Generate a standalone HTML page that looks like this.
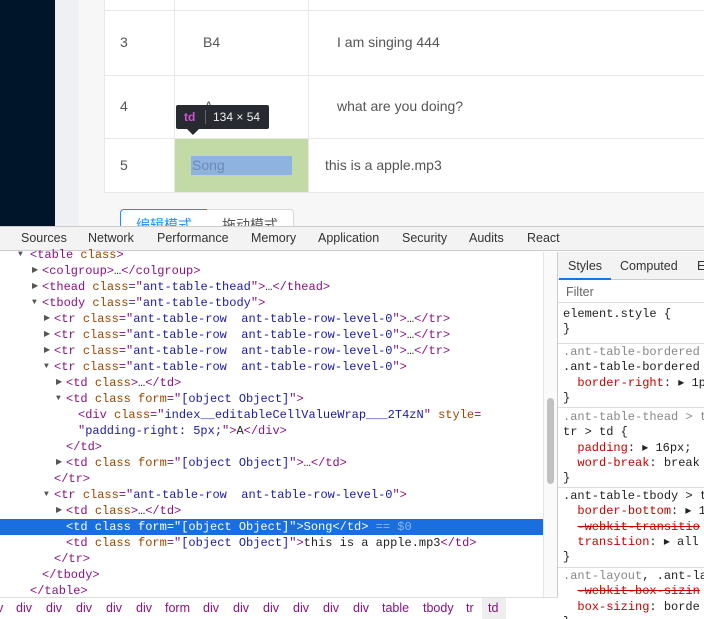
<!DOCTYPE html>
<html><head><meta charset="utf-8"><style>
*{margin:0;padding:0;box-sizing:border-box}
body{width:704px;height:619px;overflow:hidden;position:relative;background:#fff;font-family:"Liberation Sans",sans-serif}
.abs{position:absolute}
.mono{font-family:"Liberation Mono",monospace;font-size:12px;white-space:pre;color:#222}
.t{color:#881280}.a{color:#994500}.v{color:#1a1aa6}
.ln{position:absolute;height:16px;line-height:16px}
.tri{font-size:8px;color:#555;position:absolute}
.sb{font-family:"Liberation Mono",monospace;font-size:12px;line-height:15.3px;white-space:pre;color:#222;padding-left:5px;border-bottom:1px solid #ddd;overflow:hidden}
.r{color:#c80000}.g{color:#888}.s{color:#c80000;text-decoration:line-through}
</style></head><body>
<div class="abs" style="left:0;top:0;width:55px;height:226px;background:#001529"></div>
<div class="abs" style="left:55px;top:0;width:24px;height:226px;background:#eef0f3"></div>
<div class="abs" style="left:79px;top:0;width:625px;height:226px;background:#f7f7f7"></div>
<div class="abs" style="left:104px;top:0;width:600px;height:192px;background:#fff;border-left:1px solid #e8e8e8"></div>
<div class="abs" style="left:104px;top:10px;width:600px;height:1px;background:#e8e8e8"></div>
<div class="abs" style="left:104px;top:75px;width:600px;height:1px;background:#e8e8e8"></div>
<div class="abs" style="left:104px;top:138px;width:600px;height:1px;background:#e8e8e8"></div>
<div class="abs" style="left:104px;top:192px;width:600px;height:1px;background:#e8e8e8"></div>
<div class="abs" style="left:174px;top:0;width:1px;height:192px;background:#e8e8e8"></div>
<div class="abs" style="left:308px;top:0;width:1px;height:192px;background:#e8e8e8"></div>
<div class="abs" style="left:175px;top:139px;width:133px;height:53px;background:#c2dba6"></div>
<div class="abs" style="left:191px;top:156px;width:101px;height:19px;background:#8fb3e0"></div>
<div class="abs" style="font-size:14px;color:#555;left:120px;top:34px">3</div>
<div class="abs" style="font-size:14px;color:#555;left:203px;top:34px">B4</div>
<div class="abs" style="font-size:14px;color:#555;left:337px;top:34px">I am singing 444</div>
<div class="abs" style="font-size:14px;color:#555;left:120px;top:98px">4</div>
<div class="abs" style="font-size:14px;color:#555;left:204px;top:98px">A</div>
<div class="abs" style="font-size:14px;color:#555;left:337px;top:98px">what are you doing?</div>
<div class="abs" style="font-size:14px;color:#555;left:120px;top:157px">5</div>
<div class="abs" style="font-size:14px;color:#6a8bb5;left:192px;top:157px">Song</div>
<div class="abs" style="font-size:14px;color:#555;left:325px;top:157px">this is a apple.mp3</div>
<div class="abs" style="left:176px;top:105px;width:93px;height:24px;background:#272a31;border-radius:2px"></div>
<div class="abs" style="left:187px;top:129px;width:0;height:0;border-left:6px solid transparent;border-right:6px solid transparent;border-top:6px solid #272a31"></div>
<div class="abs" style="left:184px;top:110px;font-size:12px;font-weight:bold;color:#d84fd6">td</div>
<div class="abs" style="left:205px;top:110px;width:1px;height:14px;background:#666"></div>
<div class="abs" style="left:213px;top:110px;font-size:12px;color:#eee">134 × 54</div>
<div class="abs" style="left:120px;top:209px;width:88px;height:30px;border:1px solid #1890ff;border-radius:4px 0 0 4px;background:#fff;color:#1890ff;font-size:14px;font-family:'Liberation Sans','Noto Sans CJK SC',sans-serif;padding:5px 0 0 15px">编辑模式</div>
<div class="abs" style="left:207px;top:209px;width:87px;height:30px;border:1px solid #d9d9d9;border-left:none;border-radius:0 4px 4px 0;background:#fff;color:#555;font-size:14px;font-family:'Liberation Sans','Noto Sans CJK SC',sans-serif;padding:5px 0 0 15px">拖动模式</div>
<div class="abs" style="left:0;top:226px;width:704px;height:393px;background:#fff;border-top:1px solid #ccc"></div>
<div class="abs" style="left:0;top:227px;width:704px;height:24px;background:#f3f3f3;border-bottom:1px solid #ccc;font-size:12.5px;color:#333;line-height:23px">
<span class="abs" style="left:21px">Sources</span><span class="abs" style="left:88px">Network</span><span class="abs" style="left:157px">Performance</span><span class="abs" style="left:251px">Memory</span><span class="abs" style="left:318px">Application</span><span class="abs" style="left:402px">Security</span><span class="abs" style="left:469px">Audits</span><span class="abs" style="left:527px">React</span></div>
<div class="abs mono" style="left:0;top:247px;width:543px;height:350px">
<div class="ln" style="top:0"><span class="tri" style="left:18px">▼</span><span class="abs" style="left:30px"><span class="t">&lt;table </span><span class="a">class</span><span class="t">&gt;</span></span></div>
<div class="ln" style="top:16px"><span class="tri" style="left:32px">▶</span><span class="abs" style="left:42px"><span class="t">&lt;colgroup&gt;</span>…<span class="t">&lt;/colgroup&gt;</span></span></div>
<div class="ln" style="top:32px"><span class="tri" style="left:32px">▶</span><span class="abs" style="left:42px"><span class="t">&lt;thead </span><span class="a">class</span><span class="t">="</span><span class="v">ant-table-thead</span><span class="t">"&gt;</span>…<span class="t">&lt;/thead&gt;</span></span></div>
<div class="ln" style="top:48px"><span class="tri" style="left:32px">▼</span><span class="abs" style="left:42px"><span class="t">&lt;tbody </span><span class="a">class</span><span class="t">="</span><span class="v">ant-table-tbody</span><span class="t">"&gt;</span></span></div>
<div class="ln" style="top:64px"><span class="tri" style="left:44px">▶</span><span class="abs" style="left:54px"><span class="t">&lt;tr </span><span class="a">class</span><span class="t">="</span><span class="v">ant-table-row  ant-table-row-level-0</span><span class="t">"&gt;</span>…<span class="t">&lt;/tr&gt;</span></span></div>
<div class="ln" style="top:80px"><span class="tri" style="left:44px">▶</span><span class="abs" style="left:54px"><span class="t">&lt;tr </span><span class="a">class</span><span class="t">="</span><span class="v">ant-table-row  ant-table-row-level-0</span><span class="t">"&gt;</span>…<span class="t">&lt;/tr&gt;</span></span></div>
<div class="ln" style="top:96px"><span class="tri" style="left:44px">▶</span><span class="abs" style="left:54px"><span class="t">&lt;tr </span><span class="a">class</span><span class="t">="</span><span class="v">ant-table-row  ant-table-row-level-0</span><span class="t">"&gt;</span>…<span class="t">&lt;/tr&gt;</span></span></div>
<div class="ln" style="top:112px"><span class="tri" style="left:44px">▼</span><span class="abs" style="left:54px"><span class="t">&lt;tr </span><span class="a">class</span><span class="t">="</span><span class="v">ant-table-row  ant-table-row-level-0</span><span class="t">"&gt;</span></span></div>
<div class="ln" style="top:128px"><span class="tri" style="left:56px">▶</span><span class="abs" style="left:66px"><span class="t">&lt;td </span><span class="a">class</span><span class="t">&gt;</span>…<span class="t">&lt;/td&gt;</span></span></div>
<div class="ln" style="top:144px"><span class="tri" style="left:56px">▼</span><span class="abs" style="left:66px"><span class="t">&lt;td </span><span class="a">class form</span><span class="t">="</span><span class="v">[object Object]</span><span class="t">"&gt;</span></span></div>
<div class="ln" style="top:160px"><span class="abs" style="left:78px"><span class="t">&lt;div </span><span class="a">class</span><span class="t">="</span><span class="v">index__editableCellValueWrap___2T4zN</span><span class="t">" </span><span class="a">style</span><span class="t">=</span></span></div>
<div class="ln" style="top:176px"><span class="abs" style="left:78px"><span class="t">"</span><span class="v">padding-right: 5px;</span><span class="t">"&gt;</span>A<span class="t">&lt;/div&gt;</span></span></div>
<div class="ln" style="top:192px"><span class="abs" style="left:66px"><span class="t">&lt;/td&gt;</span></span></div>
<div class="ln" style="top:208px"><span class="tri" style="left:56px">▶</span><span class="abs" style="left:66px"><span class="t">&lt;td </span><span class="a">class form</span><span class="t">="</span><span class="v">[object Object]</span><span class="t">"&gt;</span>…<span class="t">&lt;/td&gt;</span></span></div>
<div class="ln" style="top:224px"><span class="abs" style="left:54px"><span class="t">&lt;/tr&gt;</span></span></div>
<div class="ln" style="top:240px"><span class="tri" style="left:44px">▼</span><span class="abs" style="left:54px"><span class="t">&lt;tr </span><span class="a">class</span><span class="t">="</span><span class="v">ant-table-row  ant-table-row-level-0</span><span class="t">"&gt;</span></span></div>
<div class="ln" style="top:256px"><span class="tri" style="left:56px">▶</span><span class="abs" style="left:66px"><span class="t">&lt;td </span><span class="a">class</span><span class="t">&gt;</span>…<span class="t">&lt;/td&gt;</span></span></div>
<div class="ln" style="top:272px;left:0;width:543px;background:#1a6fe0;color:#fff"><span class="abs" style="left:66px">&lt;td class form="[object Object]"&gt;Song&lt;/td&gt; <span style="color:#8fb4ef">== $0</span></span></div>
<div class="ln" style="top:288px"><span class="abs" style="left:66px"><span class="t">&lt;td </span><span class="a">class form</span><span class="t">="</span><span class="v">[object Object]</span><span class="t">"&gt;</span>this is a apple.mp3<span class="t">&lt;/td&gt;</span></span></div>
<div class="ln" style="top:304px"><span class="abs" style="left:54px"><span class="t">&lt;/tr&gt;</span></span></div>
<div class="ln" style="top:320px"><span class="abs" style="left:42px"><span class="t">&lt;/tbody&gt;</span></span></div>
<div class="ln" style="top:336px"><span class="abs" style="left:30px"><span class="t">&lt;/table&gt;</span></span></div>
</div>
<div class="abs" style="left:543px;top:252px;width:15px;height:346px;background:#fafafa;border-left:1px solid #e5e5e5;border-right:1px solid #ccc"></div>
<div class="abs" style="left:547px;top:398px;width:7px;height:86px;background:#c1c1c1;border-radius:4px"></div>
<div class="abs" style="left:0;top:597px;width:558px;height:22px;background:#fff;border-top:1px solid #ddd;font-size:12.5px;color:#881280;line-height:21px">
<span class="abs" style="left:-3px">v</span><span class="abs" style="left:16px">div</span><span class="abs" style="left:46px">div</span><span class="abs" style="left:76px">div</span><span class="abs" style="left:106px">div</span><span class="abs" style="left:136px">div</span><span class="abs" style="left:165px">form</span><span class="abs" style="left:203px">div</span><span class="abs" style="left:233px">div</span><span class="abs" style="left:263px">div</span><span class="abs" style="left:293px">div</span><span class="abs" style="left:323px">div</span><span class="abs" style="left:353px">div</span><span class="abs" style="left:382px">table</span><span class="abs" style="left:423px">tbody</span><span class="abs" style="left:466px">tr</span><span class="abs" style="left:482px;width:24px;height:21px;background:#eee;padding-left:6px">td</span></div>
<div class="abs" style="left:558px;top:252px;width:146px;height:367px;background:#fff"></div>
<div class="abs" style="left:558px;top:252px;width:146px;height:28px;background:#f3f3f3;border-bottom:1px solid #ccc;font-size:12.5px;color:#333;line-height:28px"><span class="abs" style="left:10px">Styles</span><span class="abs" style="left:62px">Computed</span><span class="abs" style="left:139px">E</span></div>
<div class="abs" style="left:559px;top:278px;width:52px;height:2px;background:#1a73e8"></div>
<div class="abs" style="left:558px;top:281px;width:146px;height:22px;border-bottom:1px solid #ddd;font-size:12.5px;color:#666;padding:4px 0 0 8px">Filter</div>
<div class="abs sb" style="left:558px;top:307px;width:146px;height:37px">element.style {
}</div>
<div class="abs sb" style="left:558px;top:344px;width:146px;height:64px;padding-top:1px"><span class="g">.ant-table-bordered</span>
.ant-table-bordered
  <span class="r">border-right</span>: ▸ 1px
}</div>
<div class="abs sb" style="left:558px;top:408px;width:146px;height:80px;padding-top:2px"><span class="g">.ant-table-thead &gt; t</span>
tr &gt; td {
  <span class="r">padding</span>: ▸ 16px;
  <span class="r">word-break</span>: break
}</div>
<div class="abs sb" style="left:558px;top:488px;width:146px;height:80px;padding-top:1px">.ant-table-tbody &gt; t
  <span class="r">border-bottom</span>: ▸ 1p
  <span class="s">-webkit-transitio</span>
  <span class="r">transition</span>: ▸ all
}</div>
<div class="abs sb" style="left:558px;top:568px;width:146px;height:51px;padding-top:1px;border:none"><span class="g">.ant-layout</span>, .ant-la
  <span class="s">-webkit-box-sizin</span>
  <span class="r">box-sizing</span>: borde
}</div>
</body></html>
